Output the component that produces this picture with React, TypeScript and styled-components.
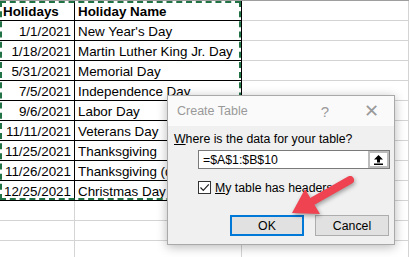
import { Fragment } from 'react';
import styled, { createGlobalStyle } from 'styled-components';

const GlobalStyle = createGlobalStyle`
  html, body {
    margin: 0;
    padding: 0;
    background: #ffffff;
  }
  body {
    width: 409px;
    height: 257px;
    overflow: hidden;
  }
`;

const Page = styled.div`
  position: relative;
  width: 409px;
  height: 257px;
  overflow: hidden;
  background: #ffffff;
  font-family: 'Liberation Sans', Arial, sans-serif;
`;

const Sheet = styled.div`
  display: grid;
  grid-template-columns: 75px 167px 1fr;
  grid-auto-rows: 20px;
  border-top: 1px solid #9e9e9e;
`;

const Cell = styled.div<{ $align?: 'left' | 'right'; $bold?: boolean; $ruled?: boolean }>`
  box-sizing: border-box;
  display: flex;
  align-items: center;
  justify-content: ${({ $align }) => ($align === 'right' ? 'flex-end' : 'flex-start')};
  padding: 1px 3px 0 3px;
  font-size: 13.4px;
  font-weight: ${({ $bold }) => ($bold ? 700 : 400)};
  color: #000000;
  white-space: nowrap;
  overflow: visible;
  border-right: 1px solid ${({ $ruled }) => ($ruled ? '#000000' : '#d4d4d4')};
  border-bottom: 1px solid ${({ $ruled }) => ($ruled ? '#000000' : '#d4d4d4')};
`;

const Marquee = styled.div`
  position: absolute;
  left: 0;
  top: 1px;
  width: 241px;
  height: 199px;
  box-sizing: border-box;
  border: 2px dashed #217346;
  pointer-events: none;
`;

const Dialog = styled.div`
  position: absolute;
  left: 167px;
  top: 95px;
  width: 228px;
  height: 150px;
  box-sizing: border-box;
  display: flex;
  flex-direction: column;
  background: #f0f0f0;
  border: 1px solid #a9a9a9;
  box-shadow: 0 2px 10px rgba(0, 0, 0, 0.28);
  font-family: 'Liberation Sans', Arial, sans-serif;
  font-size: 12px;
  color: #000000;
`;

const TitleBar = styled.div`
  height: 30px;
  flex: none;
  display: flex;
  align-items: center;
  padding-left: 9px;
  background: #fafafa;
  color: #999999;
  font-size: 12.5px;
`;

const Title = styled.span`
  flex: 1;
`;

const TitleButton = styled.span<{ $size: number }>`
  width: 46px;
  text-align: center;
  font-size: ${({ $size }) => $size}px;
  color: #9a9a9a;
`;

const Body = styled.div`
  flex: 1;
  display: flex;
  flex-direction: column;
  padding: 6px 5px 0 6px;
`;

const Prompt = styled.div`
  font-size: 12.3px;
  line-height: 14px;
`;

const Key = styled.span`
  text-decoration: underline;
`;

const RangeBox = styled.div`
  margin: 4px 0 0 24px;
  width: 192px;
  height: 19px;
  box-sizing: border-box;
  display: flex;
  align-items: center;
  border: 1px solid #7a7a7a;
  background: #ffffff;
`;

const RangeText = styled.span`
  flex: 1;
  padding-left: 4px;
  font-size: 12.3px;
`;

const Collapse = styled.span`
  width: 21px;
  height: 17px;
  box-sizing: border-box;
  display: flex;
  align-items: center;
  justify-content: center;
  border: 2px solid #bcbcbc;
  background: #ffffff;
`;

const CheckRow = styled.label`
  margin: 11px 0 0 24px;
  height: 15px;
  display: flex;
  align-items: center;
  gap: 4px;
  font-size: 12.3px;
`;

const Box = styled.span`
  width: 13px;
  height: 13px;
  box-sizing: border-box;
  display: flex;
  align-items: center;
  justify-content: center;
  border: 1px solid #333333;
  background: #ffffff;
`;

const Buttons = styled.div`
  margin-top: 20px;
  display: flex;
  justify-content: flex-end;
  gap: 11px;
`;

const Button = styled.div<{ $primary?: boolean }>`
  width: 74px;
  height: 21px;
  box-sizing: border-box;
  display: flex;
  align-items: center;
  justify-content: center;
  background: #e1e1e1;
  border: ${({ $primary }) => ($primary ? '2px solid #0078d7' : '1px solid #adadad')};
  font-size: 12.3px;
`;

const Arrow = styled.svg`
  position: absolute;
  left: 0;
  top: 0;
  width: 409px;
  height: 257px;
  pointer-events: none;
  filter: drop-shadow(1px 2px 2px rgba(0, 0, 0, 0.35));
`;

const rows: [string, string][] = [
  ['1/1/2021', "New Year's Day"],
  ['1/18/2021', 'Martin Luther King Jr. Day'],
  ['5/31/2021', 'Memorial Day'],
  ['7/5/2021', 'Independence Day'],
  ['9/6/2021', 'Labor Day'],
  ['11/11/2021', 'Veterans Day'],
  ['11/25/2021', 'Thanksgiving'],
  ['11/26/2021', 'Thanksgiving (day after)'],
  ['12/25/2021', 'Christmas Day'],
];

export default function App() {
  return (
    <Page>
      <GlobalStyle />
      <Sheet>
        <Cell $bold $ruled>Holidays</Cell>
        <Cell $bold $ruled>Holiday Name</Cell>
        <Cell />
        {rows.map(([date, name]) => (
          <Fragment key={date}>
            <Cell $align="right" $ruled>
              {date}
            </Cell>
            <Cell $ruled>{name}</Cell>
            <Cell />
          </Fragment>
        ))}
        {[0, 1, 2].map((i) => (
          <Fragment key={i}>
            <Cell />
            <Cell />
            <Cell />
          </Fragment>
        ))}
      </Sheet>
      <Marquee />

      <Dialog>
        <TitleBar>
          <Title>Create Table</Title>
          <TitleButton $size={15}>?</TitleButton>
          <TitleButton $size={18}>✕</TitleButton>
        </TitleBar>
        <Body>
          <Prompt>
            <Key>W</Key>here is the data for your table?
          </Prompt>
          <RangeBox>
            <RangeText>=$A$1:$B$10</RangeText>
            <Collapse>
              <svg width="11" height="11" viewBox="0 0 11 11">
                <path d="M5.5 1 L10 5.5 L7 5.5 L7 8.5 L4 8.5 L4 5.5 L1 5.5 Z" fill="#000" />
                <rect x="1" y="9.5" width="9" height="1.5" fill="#000" />
              </svg>
            </Collapse>
          </RangeBox>
          <CheckRow>
            <Box>
              <svg width="11" height="11" viewBox="0 0 11 11">
                <path d="M1.5 5.5 L4.3 8.3 L9.8 2.3" fill="none" stroke="#222" strokeWidth="1.2" />
              </svg>
            </Box>
            <span>
              <Key>M</Key>y table has headers
            </span>
          </CheckRow>
          <Buttons>
            <Button $primary>OK</Button>
            <Button>Cancel</Button>
          </Buttons>
        </Body>
      </Dialog>

      <Arrow viewBox="0 0 409 257">
        <line x1="350" y1="180" x2="313" y2="201" stroke="#ef4351" strokeWidth="8" strokeLinecap="round" />
        <polygon points="292,213 305,189 320,214" fill="#ef4351" />
      </Arrow>
    </Page>
  );
}
